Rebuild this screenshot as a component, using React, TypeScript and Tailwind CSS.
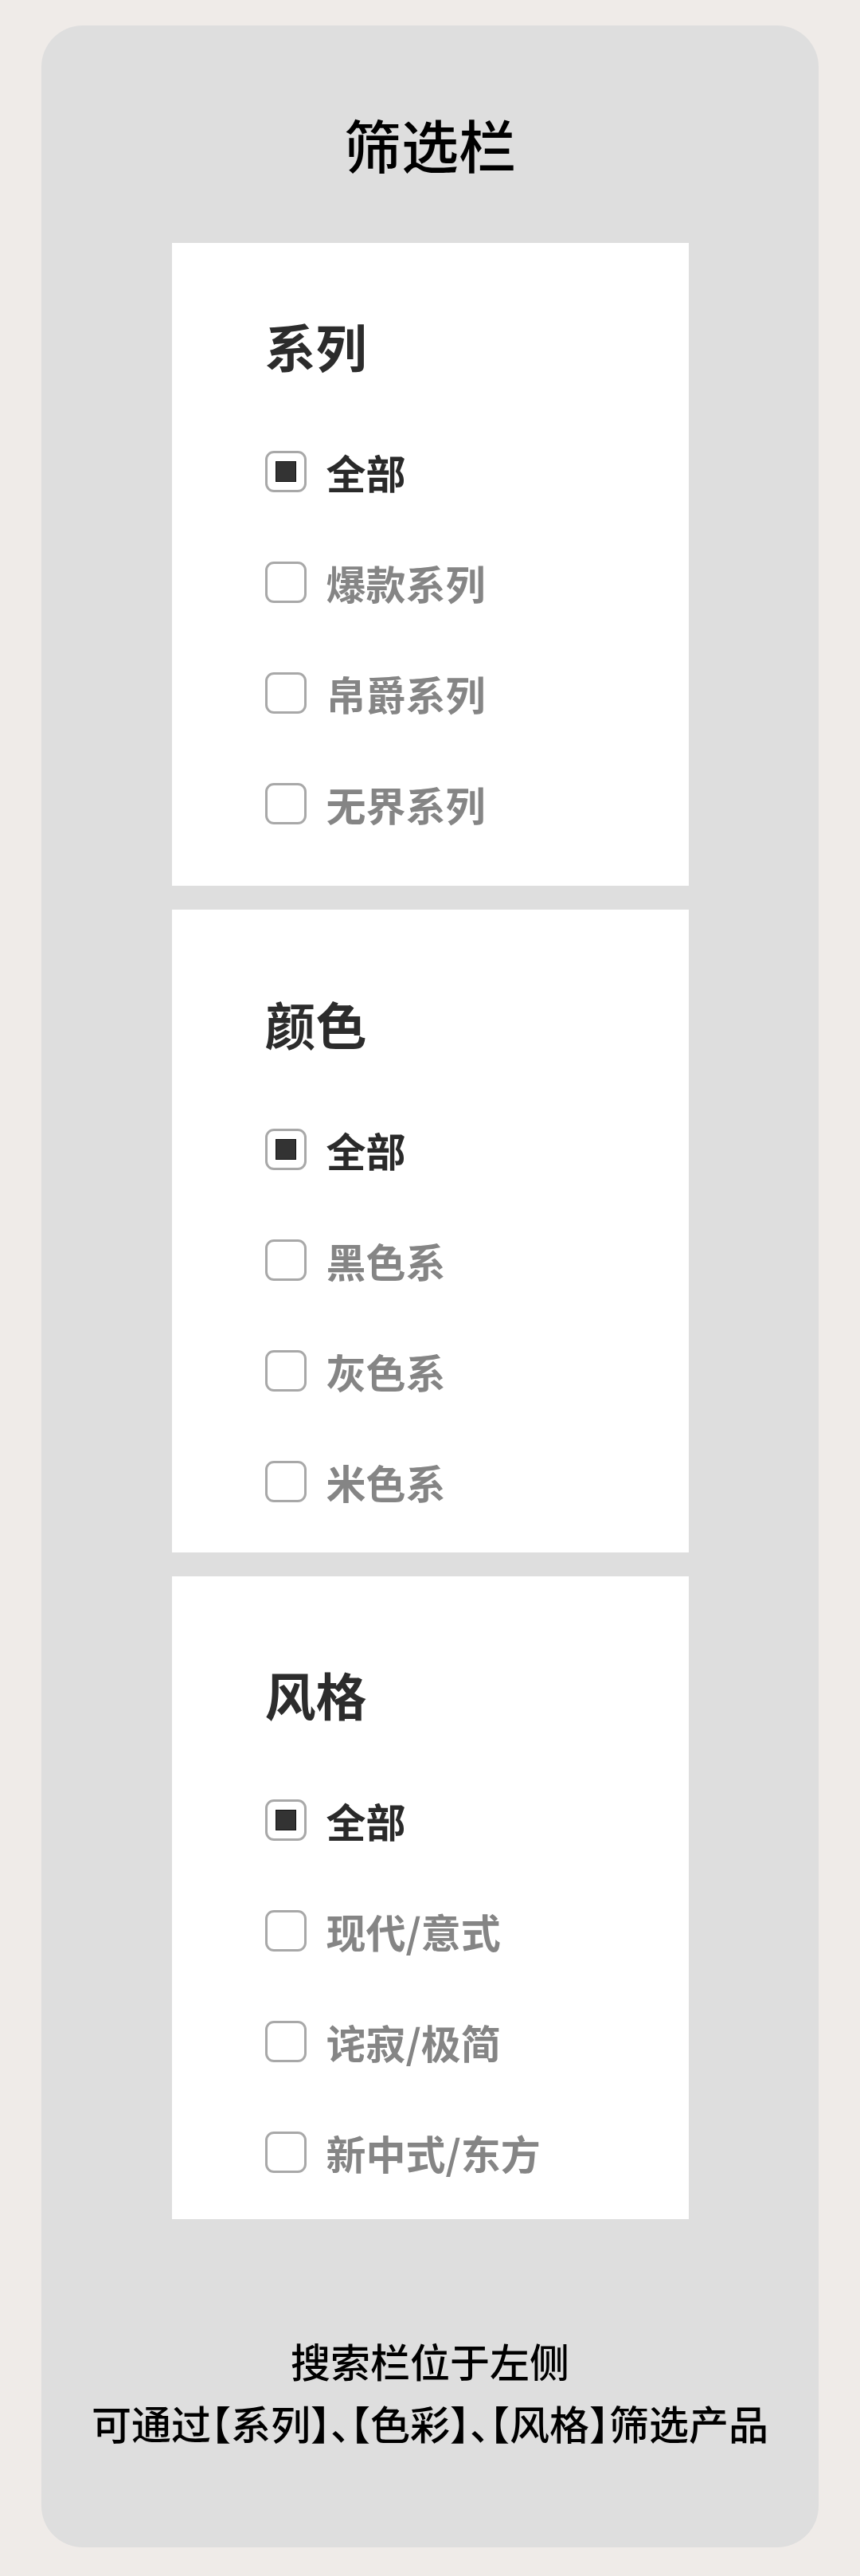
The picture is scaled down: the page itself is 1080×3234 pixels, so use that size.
import React from "react";

interface FilterGroup {
  title: string;
  options: string[];
  pad: string;
}

// each card's content sits slightly lower than the previous one in the design
const groups: FilterGroup[] = [
  { title: "系列", options: ["全部", "爆款系列", "帛爵系列", "无界系列"], pad: "pt-[96px]" },
  { title: "颜色", options: ["全部", "黑色系", "灰色系", "米色系"], pad: "pt-[110px]" },
  { title: "风格", options: ["全部", "现代/意式", "诧寂/极简", "新中式/东方"], pad: "pt-[115px]" },
];

const Checkbox = ({ checked }: { checked: boolean }) => (
  <span className="flex h-[52px] w-[52px] shrink-0 items-center justify-center rounded-[11px] border-[3px] border-[#a8a8a8] bg-white">
    {checked && <span className="h-[26px] w-[26px] border border-[#111] bg-[#333]" />}
  </span>
);

const FilterCard = ({ group }: { group: FilterGroup }) => (
  <div className={`flex h-[807px] w-[649px] flex-col bg-white pl-[117px] ${group.pad}`}>
    <h2 className="text-[64px] font-bold leading-none text-[#2c2c2c]">{group.title}</h2>
    <ul className="mt-[57px] flex flex-col">
      {group.options.map((opt, i) => (
        <li key={opt} className="flex h-[139px] items-center gap-[25px]">
          <Checkbox checked={i === 0} />
          <span
            className={`text-[50px] font-bold leading-none ${i === 0 ? "text-[#2a2a2a]" : "text-[#858585]"}`}
          >
            {opt}
          </span>
        </li>
      ))}
    </ul>
  </div>
);

export default function App() {
  return (
    <div className="w-[1080px] bg-[#efebe8] px-[52px] pb-[36px] pt-[32px] font-['Noto_Sans_CJK_SC','Noto_Sans',sans-serif]">
      <div className="flex flex-col items-center rounded-[52px] bg-[#dedede] pb-[118px] pt-[105px]">
        <h1 className="text-[72px] font-medium leading-[86px] text-black">筛选栏</h1>

        <div className="mt-[82px] flex flex-col gap-[30px]">
          {groups.map((g) => (
            <FilterCard key={g.title} group={g} />
          ))}
        </div>

        <div className="mt-[138px] text-center text-[50px] font-medium leading-[78px] text-black [font-feature-settings:'halt']">
          <p>搜索栏位于左侧</p>
          <p>可通过【系列】、【色彩】、【风格】筛选产品</p>
        </div>
      </div>
    </div>
  );
}
